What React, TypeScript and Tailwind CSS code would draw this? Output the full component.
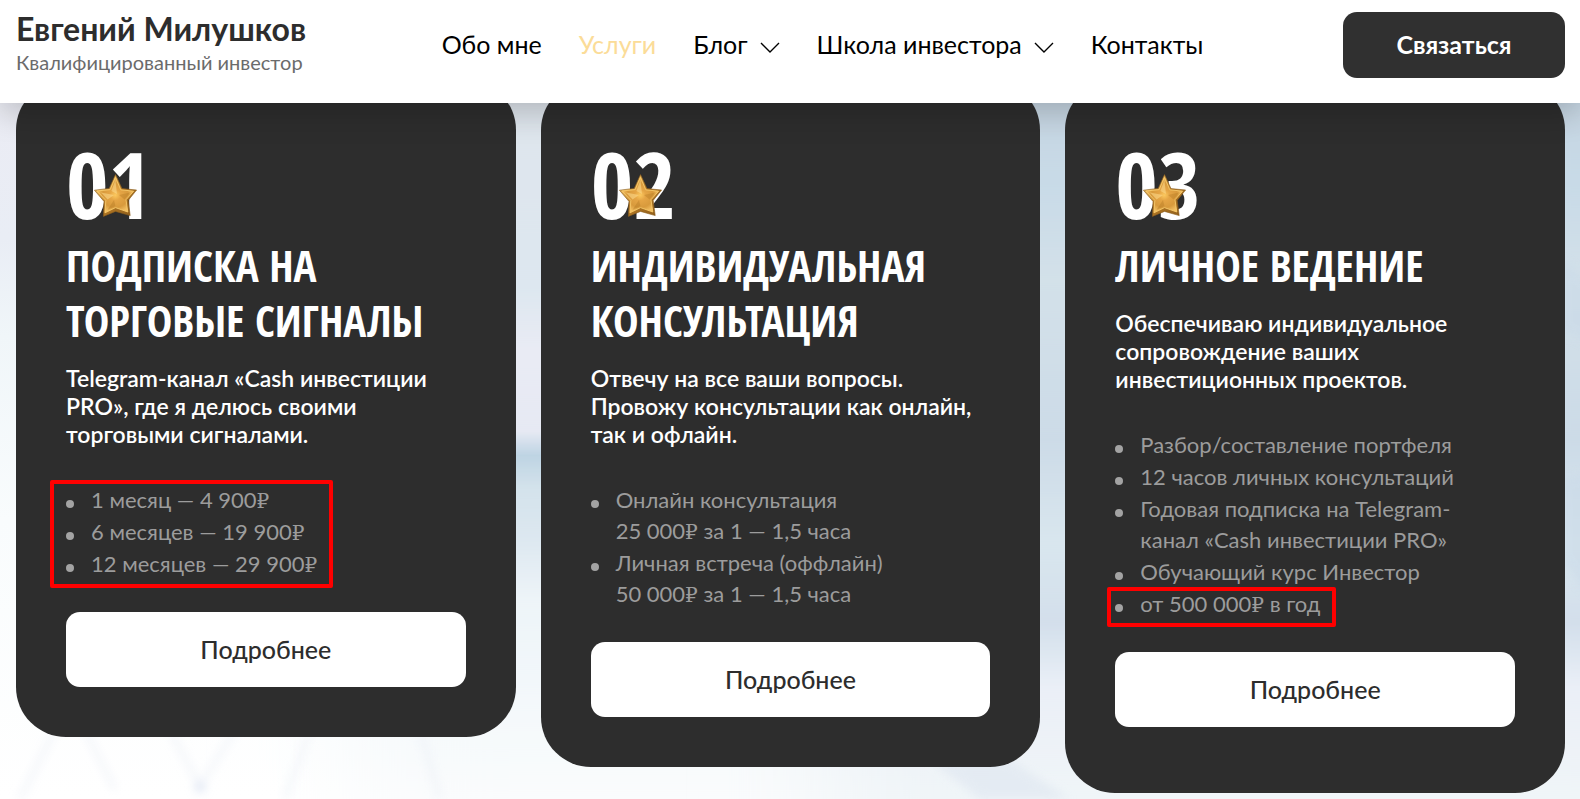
type Card = {
  number: string;
  title: string;
  text: string[];
  items: string[][];
  mark?: string;
  markLast?: string;
  padding: string;
};

const cards: Card[] = [
  {
    number: '01',
    title: 'Подписка на торговые сигналы',
    text: ['Telegram-канал «Cash инвестиции', 'PRO», где я делюсь своими', 'торговыми сигналами.'],
    items: [['1 месяц — 4 900₽'], ['6 месяцев — 19 900₽'], ['12 месяцев — 29 900₽']],
    mark: 'absolute -top-1 -left-4 h-[108px] w-[283px] rounded-xs border-4 border-[#ff0000]',
    padding: 'pb-[50px]',
  },
  {
    number: '02',
    title: 'Индивидуальная консультация',
    text: ['Отвечу на все ваши вопросы.', 'Провожу консультации как онлайн,', 'так и офлайн.'],
    items: [
      ['Онлайн консультация', '25 000₽ за 1 — 1,5 часа'],
      ['Личная встреча (оффлайн)', '50 000₽ за 1 — 1,5 часа'],
    ],
    padding: 'pb-[50px]',
  },
  {
    number: '03',
    title: 'Личное ведение',
    text: ['Обеспечиваю индивидуальное', 'сопровождение ваших', 'инвестиционных проектов.'],
    items: [
      ['Разбор/составление портфеля'],
      ['12 часов личных консультаций'],
      ['Годовая подписка на Telegram-', 'канал «Cash инвестиции PRO»'],
      ['Обучающий курс Инвестор'],
      ['от 500 000₽ в год'],
    ],
    markLast: 'absolute -bottom-2 -left-2 h-10 w-[229px] rounded-xs border-4 border-[#ff0000]',
    padding: 'pb-[66px]',
  },
];

const links = [
  { label: 'Обо мне' },
  { label: 'Услуги', active: true },
  { label: 'Блог', menu: true },
  { label: 'Школа инвестора', menu: true },
  { label: 'Контакты' },
];

function Rubles({ text }: { text: string }) {
  const [before, after] = text.split('₽');
  return (
    <>
      {before}
      {after !== undefined && (
        <span className="font-['DejaVu_Serif',serif] text-xl leading-none">₽</span>
      )}
      {after}
    </>
  );
}

function Chevron() {
  return (
    <svg className="mt-1 h-[11px] w-5" viewBox="0 0 20 11" fill="none" stroke="currentColor" strokeWidth="1.4" aria-hidden="true">
      <path d="M1 1 L10 10 L19 1" />
    </svg>
  );
}

function Star() {
  return (
    <svg className="absolute top-11 left-7 size-[43px]" viewBox="0 0 43 43" aria-hidden="true">
      <defs>
        <radialGradient id="gold" cx="0.5" cy="0.5" r="0.5">
          <stop offset="0" stopColor="#fcc95f" />
          <stop offset="0.3" stopColor="#e5a545" />
          <stop offset="0.7" stopColor="#d89a3c" />
          <stop offset="1" stopColor="#f3c062" />
        </radialGradient>
        <linearGradient id="rim" x1="0" y1="0" x2="1" y2="1">
          <stop offset="0" stopColor="#ffd982" />
          <stop offset="0.5" stopColor="#b57a26" />
          <stop offset="1" stopColor="#8a5a18" />
        </linearGradient>
      </defs>
      <path d="M21.5 .6 L28 14.6 L42.6 16 L34.2 26.4 L36.2 41.6 L21.5 37.4 L9.4 42.4 L10 27.4 L.4 16.2 L15.2 14.4 Z" fill="url(#rim)" stroke="#8a5c1c" strokeWidth=".6" strokeLinejoin="round" />
      <path d="M21.4 3.4 L26.8 15.8 L39.6 17.2 L32 25.8 L33.8 38 L21.5 33.6 L11 38.8 L11.8 26.4 L3 17 L16.2 15.6 Z" fill="url(#gold)" stroke="#f8cb6c" strokeWidth=".9" strokeLinejoin="round" />
      <path d="M21.4 6 L23 20 L17.4 17 Z M7 18.4 L20 21 L13.6 25.4 Z" fill="#ffe296" opacity=".5" />
      <path d="M36 18.6 L25 21 L30.6 25.6 Z M13.4 36 L20 26 L21.4 32 Z" fill="#a66d1c" opacity=".3" />
    </svg>
  );
}

function Backdrop() {
  return (
    <svg className="absolute inset-0 size-full" viewBox="0 0 1580 799" preserveAspectRatio="none" aria-hidden="true">
      <defs>
        <linearGradient id="left" x1="0" y1="0" x2="0" y2="1">
          <stop offset=".12" stopColor="#ebecf4" />
          <stop offset=".3" stopColor="#e9edf5" />
          <stop offset=".42" stopColor="#f0f6f9" />
          <stop offset=".65" stopColor="#f9fcfd" />
          <stop offset="1" stopColor="#ffffff" />
        </linearGradient>
        <linearGradient id="middle" x1="0" y1="0" x2="0" y2="1">
          <stop offset=".12" stopColor="#dfe5ec" />
          <stop offset=".36" stopColor="#dde7f0" />
          <stop offset=".44" stopColor="#e9ebf4" />
          <stop offset=".54" stopColor="#e6e9f3" />
          <stop offset=".57" stopColor="#bed4e3" />
          <stop offset=".61" stopColor="#d3e2eb" />
          <stop offset=".67" stopColor="#dce7f0" />
          <stop offset=".75" stopColor="#edf4f8" />
          <stop offset="1" stopColor="#fafcfd" />
        </linearGradient>
        <linearGradient id="right" x1="0" y1="0" x2="0" y2="1">
          <stop offset=".12" stopColor="#c6d6e2" />
          <stop offset=".23" stopColor="#c8dae7" />
          <stop offset=".35" stopColor="#d3e1e9" />
          <stop offset=".55" stopColor="#ccdbe7" />
          <stop offset=".68" stopColor="#d9e6ee" />
          <stop offset=".78" stopColor="#d3dfeb" />
          <stop offset=".86" stopColor="#eaeff7" />
          <stop offset="1" stopColor="#f0f5f8" />
        </linearGradient>
        <filter id="soft" x="-20%" y="-20%" width="140%" height="140%">
          <feGaussianBlur stdDeviation="5" />
        </filter>
        <filter id="merge" x="-20%" width="140%">
          <feGaussianBlur stdDeviation="60 0" />
        </filter>
      </defs>
      <rect width="1580" height="799" fill="url(#left)" />
      <rect x="350" width="1300" height="799" fill="url(#middle)" filter="url(#merge)" />
      <rect x="830" width="900" height="799" fill="url(#right)" filter="url(#merge)" />
      <g filter="url(#soft)" stroke="#e6ebf4" strokeWidth="5" fill="none" opacity=".5">
        <path d="M20 799 L55 730 M85 730 L115 790 M170 730 L200 787 L235 730 M285 799 L310 730 M420 730 L440 799" />
        <circle cx="200" cy="787" r="3" stroke="#c3d0ea" />
      </g>
      <path d="M930 760 L1010 760 L1070 799 L980 799 Z" fill="#e2e9f2" opacity=".8" filter="url(#soft)" />
      <path d="M1562 480 L1600 470 L1600 610 L1562 560 Z M1562 260 L1600 290 L1600 350 L1562 330 Z" fill="#c9d9e8" opacity=".5" filter="url(#soft)" />
    </svg>
  );
}

export default function App() {
  return (
    <div className="relative flex min-h-screen flex-col overflow-hidden bg-white font-['Lato','Noto_Sans',sans-serif]">
      <Backdrop />
      <header className="relative z-10 flex h-[103px] items-start justify-between bg-white pt-3 pr-[15px] pl-4 shadow-[0_10px_30px_rgba(0,0,0,0.2)]">
        <a href="#top" className="block w-[286px] whitespace-nowrap">
          <span className="block text-[32px] leading-[34px] font-bold text-[#2d2d2d]">Евгений Милушков</span>
          <span className="block text-xl leading-8 text-[#6b6b6b]">Квалифицированный инвестор</span>
        </a>
        <nav className="flex h-[66px] items-center gap-[37px] text-[25px] whitespace-nowrap text-black">
          {links.map((link) => (
            <a key={link.label} href="#menu" className={link.active ? 'text-[#fbdc98]' : 'flex items-center gap-3'}>
              {link.label}
              {link.menu && <Chevron />}
            </a>
          ))}
        </nav>
        <button type="button" className="h-[66px] w-[222px] rounded-[14px] bg-[#303030] text-[25px] font-bold text-white">
          Связаться
        </button>
      </header>
      <main className="relative -mt-[23px] grid grid-cols-3 items-start gap-[25px] pr-[15px] pl-4">
        {cards.map((card) => (
          <article key={card.number} className={`rounded-[50px] bg-[#2d2d2d] px-[50px] pt-[50px] ${card.padding}`}>
            <div className="relative font-['Open_Sans_Condensed','Roboto_Condensed',sans-serif] text-[92px] leading-[108px] font-bold text-white">
              {card.number}
              <Star />
            </div>
            <h2 className="font-['Open_Sans_Condensed','Roboto_Condensed',sans-serif] text-[43px] leading-[55px] font-bold text-white uppercase">
              {card.title}
            </h2>
            <p className="mt-4 text-[23px] leading-7 font-semibold text-white">
              {card.text.map((line) => (
                <span key={line} className="block">{line}</span>
              ))}
            </p>
            <ul className="relative mt-9 flex flex-col gap-px text-[22px] leading-[31px] text-[#9c9c9c]">
              {card.items.map((lines, i) => (
                <li key={lines[0]} className="relative flex gap-[17px]">
                  <span className="mt-4 size-2 shrink-0 rounded-full bg-[#a3a3a3]" />
                  <span>
                    {lines.map((line) => (
                      <span key={line} className="block">
                        <Rubles text={line} />
                      </span>
                    ))}
                  </span>
                  {card.markLast && i === card.items.length - 1 && <span className={card.markLast} />}
                </li>
              ))}
              {card.mark && <li aria-hidden="true" className={card.mark} />}
            </ul>
            <button type="button" className="mt-[33px] h-[75px] w-full rounded-[14px] bg-white text-[25px] font-medium text-[#2d2d2d]">
              Подробнее
            </button>
          </article>
        ))}
      </main>
    </div>
  );
}
